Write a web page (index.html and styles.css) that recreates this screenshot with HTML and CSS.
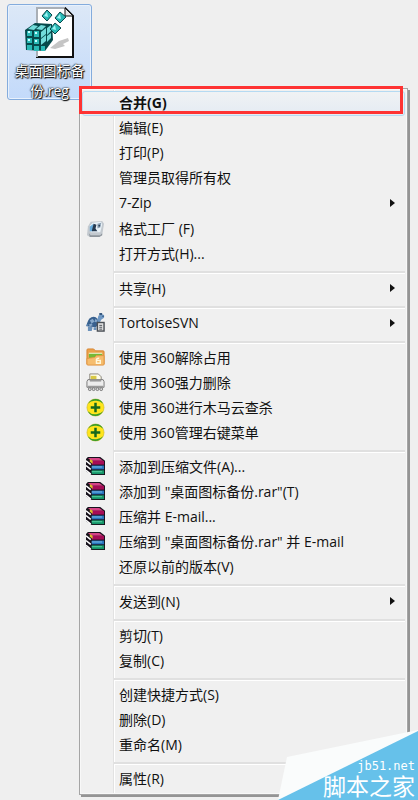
FILE: index.html
```
<!DOCTYPE html>
<html lang="zh-CN">
<head>
  <meta charset="UTF-8">
  <meta name="viewport" content="width=device-width, initial-scale=1.0">
  <title>桌面图标备份.reg</title>
  <link rel="stylesheet" href="styles.css">
</head>
<body>
  <!-- icons used in the menu -->
  <svg class="sprite" aria-hidden="true">
    <symbol id="i-factory" viewBox="0 0 20 20">
      <path d="M2 8l3-5 12-1 2 3-2 12-3 2H4l-3-2z" fill="#c3c9cf"/>
      <path d="M3 15l2 2h10l2-2v2l-3 2H4z" fill="#8e959c"/>
      <path d="M4 7l3-3 9-1 1 3-2 8H5z" fill="#e9f2f8"/>
      <path d="M4 8l4-3-1 8H4z" fill="#68acdc"/>
      <path d="M8 5l3 1-1 4 2 3H6l1-4z" fill="#26394f"/>
      <path d="M12 5l4-1-1 5-3 1z" fill="#8ea2b5"/>
      <circle cx="14" cy="7" r="1" fill="#2d4358"/>
    </symbol>
    <symbol id="i-tortoise" viewBox="0 0 20 20">
      <path d="M1 11q2-7 7-7 5 0 6 8l-4 3-9-1z" fill="#39618f"/>
      <path d="M4 8l3-2 2 3-3 2zM10 6l2 2-1 2-2-1zM3 12l3-1 1 2-3 1z" fill="#87a8ca"/>
      <path d="M12 7l1-4 3-2 3 1v3l-3 2-2 4-2-2z" fill="#6f98c4"/>
      <path d="M14 0h3v2h-3zM17 3h2v1h-2z" fill="#37587e"/>
      <path d="M2 14l5 1-1 4H2zM8 15h3v3H8zM0 12h3l-2 2H0z" fill="#6b91ba"/>
      <rect x="12" y="10" width="7" height="9" fill="#e4e4e4" stroke="#4a4f55" stroke-width="1.500"/>
      <path d="M14 13h3M14 15h3M14 17h3" stroke="#4a4f55"/>
    </symbol>
    <symbol id="i-folder" viewBox="0 0 20 20">
      <path d="M1 2q0-1 1-1h6l2 2h8q1 0 1 1v13H1z" fill="#eba24a" stroke="#d98632"/>
      <path d="M3 5h14v7H3z" fill="#fbf7db"/>
      <path d="M3 6h14v3L3 11z" fill="#76b935"/>
      <path d="M1 11l8-1 2-2h8v9q0 1-1 1H2q-1 0-1-1z" fill="#f6bd6d" stroke="#e19642"/>
      <path d="M11 13v-1q1-2 3-1M11 13h4v3h-4z" fill="none" stroke="#fff8dc" stroke-width="1.5"/>
    </symbol>
    <symbol id="i-shred" viewBox="0 0 20 20">
      <path d="M4 8V1h9l3 3v4z" fill="#fffde8" stroke="#89857c"/>
      <path d="M5 3h6v4H5z" fill="#d8c845"/>
      <path d="M2 7h16l1 2v6H1V9z" fill="#ededed" stroke="#777"/>
      <path d="M4 7h12v2H4z" fill="#999"/>
      <path d="M2 14h16" stroke="#888"/>
      <g fill="#ddd" stroke="#777">
        <circle cx="4" cy="17" r="1.500"/>
        <circle cx="8" cy="17" r="1.500"/>
        <circle cx="12" cy="17" r="1.500"/>
        <circle cx="16" cy="17" r="1.500"/>
      </g>
    </symbol>
    <symbol id="i-360" viewBox="0 0 20 20">
      <circle cx="10" cy="10" r="9" fill="#ffe51c" stroke="#c7b31f" stroke-width=".6"/>
      <path d="M2 6Q5 1 10 1q6 0 8 5-4-4-9-3-4 0-7 3z" fill="#369b2c"/>
      <path d="M18 14q-3 5-8 5-6 0-8-5 4 4 9 3 4 0 7-3z" fill="#369b2c"/>
      <path d="M10 5v10M5 10h10" stroke="#16681d" stroke-width="2.600"/>
    </symbol>
    <symbol id="i-rar" viewBox="0 0 20 20">
      <path d="M0 2l2-2h13l5 4v15H6l-6-4z" fill="#17121c"/>
      <path d="M2 1h12l4 3H6z" fill="#d84386"/>
      <path d="M6 4h13v4H6z" fill="#a60c57"/>
      <path d="M6 9h13v4H6z" fill="#2673bd"/>
      <path d="M6 10h11v1H6z" fill="#80c4ed"/>
      <path d="M6 14h13v4H6z" fill="#159568"/>
      <path d="M6 15h11v1H6z" fill="#58d3a4"/>
      <path d="M0 4l5 4M0 9l5 4M0 14l5 4" stroke="#fff" stroke-width="1.600"/>
      <path d="M4 2l3 2v3L4 5z" fill="#ddbd2d"/>
    </symbol>
  </svg>

  <main class="desktop">
    <div class="file">
      <svg class="file-icon" viewBox="0 0 52 52" aria-hidden="true">
        <path d="M13 1h28l8 8v41H13z" fill="#fff" stroke="#111" stroke-width="2"/>
        <path d="M13 50V1h28" fill="none" stroke="#a9afb6" stroke-width="2"/>
        <path d="M41 1v8h8z" fill="#e7e7e7" stroke="#111"/>
        <path d="M26 41l9-7 9-3 1 3-6 3 2 2-10 3z" fill="#c5c5c5"/>
        <path d="M1 23l10-7 17 1 1 16-8 11-19-1z" fill="#06494b"/>
        <path d="M3 24h5v5H3zM10 24h5v6h-5zM3 31h5v5H3zM10 32h5v5h-5zM3 38h5v5H3zM10 39h5v5h-5zM17 39h4v5h-4z" fill="#29b9b5"/>
        <path d="M4 22l5-4 5 1-4 4zM12 22l5-4 5 1-4 4zM17 25l5-4v6l-5 4zM23 21l4-3v6l-4 4zM17 32l5-4v6l-5 4zM23 29l4-3v5l-4 4z" fill="#72dcda"/>
        <path d="M4 24h2v2H4zM11 25h2v2h-2zM4 32h2v2H4zM11 33h2v2h-2z" fill="#c5ffff"/>
        <g fill="#29b9b5" stroke="#07484b">
          <path d="M18 9l5-6 5 5-5 6zM31 11l5-6 6 5-6 6zM26 22l5-6 6 5-6 6z"/>
        </g>
        <path d="M20 9l3-4 1 5zM33 11l3-4 1 5zM28 22l3-4 1 5z" fill="#a2f4f3"/>
      </svg>
      <span class="file-name">桌面图标备份.reg</span>
    </div>

    <ul class="menu">
      <li><button class="item default">合并(G)</button></li>
      <li><button class="item">编辑(E)</button></li>
      <li><button class="item">打印(P)</button></li>
      <li><button class="item">管理员取得所有权</button></li>
      <li><button class="item submenu">7-Zip</button></li>
      <li><button class="item"><svg class="icon"><use href="#i-factory"/></svg>格式工厂 (F)</button></li>
      <li><button class="item">打开方式(H)...</button></li>
      <li class="separator"></li>
      <li><button class="item submenu">共享(H)</button></li>
      <li class="separator"></li>
      <li><button class="item submenu"><svg class="icon"><use href="#i-tortoise"/></svg>TortoiseSVN</button></li>
      <li class="separator"></li>
      <li><button class="item"><svg class="icon"><use href="#i-folder"/></svg>使用 360解除占用</button></li>
      <li><button class="item"><svg class="icon"><use href="#i-shred"/></svg>使用 360强力删除</button></li>
      <li><button class="item"><svg class="icon"><use href="#i-360"/></svg>使用 360进行木马云查杀</button></li>
      <li><button class="item"><svg class="icon"><use href="#i-360"/></svg>使用 360管理右键菜单</button></li>
      <li class="separator"></li>
      <li><button class="item"><svg class="icon"><use href="#i-rar"/></svg>添加到压缩文件(A)...</button></li>
      <li><button class="item"><svg class="icon"><use href="#i-rar"/></svg>添加到 "桌面图标备份.rar"(T)</button></li>
      <li><button class="item"><svg class="icon"><use href="#i-rar"/></svg>压缩并 E-mail...</button></li>
      <li><button class="item"><svg class="icon"><use href="#i-rar"/></svg>压缩到 "桌面图标备份.rar" 并 E-mail</button></li>
      <li><button class="item">还原以前的版本(V)</button></li>
      <li class="separator"></li>
      <li><button class="item submenu">发送到(N)</button></li>
      <li class="separator"></li>
      <li><button class="item">剪切(T)</button></li>
      <li><button class="item">复制(C)</button></li>
      <li class="separator"></li>
      <li><button class="item">创建快捷方式(S)</button></li>
      <li><button class="item">删除(D)</button></li>
      <li><button class="item">重命名(M)</button></li>
      <li class="separator"></li>
      <li><button class="item">属性(R)</button></li>
    </ul>

    <div class="watermark">
      <svg class="watermark-bg" viewBox="0 0 140 70" aria-hidden="true">
        <path d="M0 70L9 27 140 0v70z" fill="#fafcfc"/>
        <path d="M0 70L140 1v69z" fill="#66c1ea"/>
      </svg>
      <span class="watermark-url">jb51.net</span>
      <span class="watermark-name">脚本之家</span>
    </div>
  </main>
</body>
</html>
```
FILE: styles.css
```
* {
  box-sizing: border-box;
  margin: 0;
  padding: 0;
}

body {
  font-family: "Open Sans", "Noto Sans CJK SC", sans-serif;
  font-size: 14px;
  color: #111;
  background: #efefef;
}

.sprite {
  position: absolute;
  width: 0;
  height: 0;
}

.desktop {
  position: relative;
  min-height: 100vh;
  padding: 4px 10px 4px 7px;
  overflow: hidden;
}

/* selected file on the desktop */
.file {
  display: flex;
  flex-direction: column;
  align-items: center;
  gap: 2px;
  width: 85px;
  height: 96px;
  padding: 2px 6px;
  border: 1px solid #84acdd;
  border-radius: 3px;
  background: linear-gradient(#dce8f7, #c3dafa);
  box-shadow: inset 0 0 0 1px #e8f1fc;
}

.file-icon {
  flex: none;
  width: 52px;
  height: 52px;
}

.file-name {
  line-height: 20px;
  text-align: center;
  color: #fff;
  text-shadow: 0 0 2px #000, 1px 1px 1px #000, 0 0 1px #000;
}

/* context menu */
.menu {
  position: relative;
  margin: -12px 0 0 72px;
  padding: 2px;
  list-style: none;
  border: 1px solid #a5a5a5;
  background: linear-gradient(90deg, #e2e2e2 50%, #fff 50%) 33px 0 / 2px 100% no-repeat #f0f0f0;
  box-shadow: inset 0 0 0 1px #f8f8f8, 2px 2px 0 #949494;
}

.item {
  position: relative;
  display: flex;
  align-items: center;
  width: 100%;
  height: 25px;
  padding: 0 0 3px 37px;
  border: 0;
  background: none;
  font: inherit;
  color: inherit;
  text-align: left;
  white-space: nowrap;
}

.item:hover {
  background: #e4edf6;
}

.item.default {
  font-weight: bold;
  border: 1px solid #b5daf2;
  border-radius: 3px;
  padding-left: 36px;
  background: linear-gradient(#f0f2f4, #e4ebf3);
}

/* red frame round the default command */
.item.default::after {
  content: "";
  position: absolute;
  inset: -6px 1px 1px -4px;
  border: 3px solid #fe3333;
}

.item.submenu {
  height: 26px;
  justify-content: space-between;
  padding-right: 10px;
}

.item.submenu::after {
  content: "";
  border: 4px solid transparent;
  border-left: 5px solid #111;
  border-right: 0;
}

.icon {
  position: absolute;
  left: 4px;
  width: 19px;
  height: 19px;
}

.separator {
  height: 9px;
  padding: 4px 0 0 32px;
}

.separator::before {
  content: "";
  display: block;
  height: 2px;
  background: #e0e0e0;
  border-bottom: 1px solid #fff;
}

/* site mark in the corner */
.watermark {
  position: absolute;
  right: 0;
  bottom: 0;
  display: flex;
  flex-direction: column;
  align-items: flex-end;
  width: 140px;
  height: 70px;
  padding: 28px 3px 0 0;
  color: #fff;
}

.watermark-bg {
  position: absolute;
  inset: 0;
}

.watermark-url {
  position: relative;
  font: 12px/16px "DejaVu Sans Mono", monospace;
}

.watermark-name {
  position: relative;
  font-size: 23px;
  line-height: 24px;
}
```
